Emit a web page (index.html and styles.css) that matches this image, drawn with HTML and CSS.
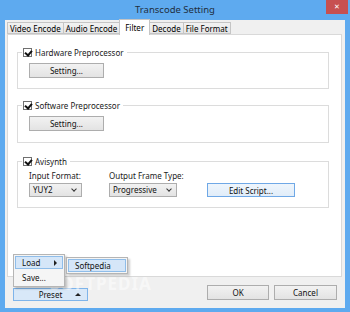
FILE: index.html
```html
<!DOCTYPE html>
<html lang="en">
<head>
    <meta charset="UTF-8">
    <title>Transcode Setting</title>
    <link rel="stylesheet" href="styles.css">
</head>
<body>

    <div class="window">
        <div class="titlebar">
            <span class="title">Transcode Setting</span>
            <div class="close">&#x2715;</div>
        </div>

        <div class="client">
            <div class="tabs">
                <div class="tab">Video Encode</div>
                <div class="tab">Audio Encode</div>
                <div class="tab active">Filter</div>
                <div class="tab">Decode</div>
                <div class="tab">File Format</div>
            </div>

            <div class="panel">
                <fieldset class="group g1">
                    <legend><span class="check"></span>Hardware Preprocessor</legend>
                    <button class="btn setting">Setting...</button>
                </fieldset>

                <fieldset class="group g2">
                    <legend><span class="check"></span>Software Preprocessor</legend>
                    <button class="btn setting">Setting...</button>
                </fieldset>

                <fieldset class="group g3">
                    <legend><span class="check"></span>Avisynth</legend>
                    <div class="row">
                        <div class="field f1">
                            <label>Input Format:</label>
                            <div class="select small">YUY2<span class="chev"></span></div>
                        </div>
                        <div class="field f2">
                            <label>Output Frame Type:</label>
                            <div class="select wide">Progressive<span class="chev"></span></div>
                        </div>
                        <button class="btn edit focus">Edit Script...</button>
                    </div>
                </fieldset>
            </div>

            <div class="footer">
                <button class="btn preset hot">Preset<span class="up"></span></button>
                <div class="spacer"></div>
                <button class="btn ok">OK</button>
                <button class="btn cancel">Cancel</button>
            </div>

            <div class="watermark">SOFTPEDIA</div>

            <div class="menu">
                <div class="item hl">Load<span class="arrow"></span></div>
                <div class="item">Save...</div>
            </div>
            <div class="submenu">
                <div class="item hl">Softpedia</div>
            </div>
        </div>
    </div>

</body>
</html>
```

FILE: styles.css
```css
* {
    margin: 0;
    padding: 0;
    box-sizing: border-box;
    font-family: 'Noto Sans', 'DejaVu Sans', sans-serif;
}

body {
    width: 350px;
    height: 312px;
    overflow: hidden;
    background: #5eaaef;
}

.window {
    display: flex;
    flex-direction: column;
    width: 350px;
    height: 312px;
    background: #5eaaef;
}

.titlebar {
    position: relative;
    height: 20px;
    display: flex;
    justify-content: center;
    align-items: center;
}

.title {
    font-size: 9.5px;
    color: #1f2e3d;
    padding-bottom: 2px;
}

.close {
    position: absolute;
    top: 0;
    right: 2px;
    width: 22px;
    height: 14px;
    background: #c75050;
    color: #fff;
    font-size: 7px;
    font-weight: bold;
    text-align: center;
    line-height: 14px;
}

.client {
    position: relative;
    flex: 1;
    margin: 0 5px 4px 5px;
    background: #f0f0f0;
    display: flex;
    flex-direction: column;
    padding: 2px 3px 0 2px;
}

.tabs {
    display: flex;
    height: 12px;
    position: relative;
    z-index: 1;
}

.tab {
    font-size: 8px;
    color: #000;
    padding: 0 2px;
    height: 12px;
    line-height: 11px;
    border: 1px solid #c5c5c5;
    border-right: none;
    background: linear-gradient(#f2f2f2, #e5e5e5);
}

.tab:last-child {
    border-right: 1px solid #c5c5c5;
}

.tab.active {
    background: #fff;
    height: 16px;
    margin-top: -3px;
    padding: 2px 5px 0;
    border-bottom: none;
    border-right: 1px solid #c5c5c5;
}

.tab.active + .tab {
    border-left: none;
}

.panel {
    height: 243px;
    background: #fff;
    border: 1px solid #d9d9d9;
    padding: 12px 12px 0 9px;
    display: flex;
    flex-direction: column;
}

.group {
    border: 1px solid #dcdcdc;
    padding: 0;
    font-size: 8px;
}

.group legend {
    display: flex;
    align-items: center;
    gap: 3px;
    margin-left: 4px;
    padding: 0 3px 0 1px;
    color: #1a1a1a;
    height: 11px;
}

.g1 { height: 42px; }
.g2 { height: 43px; margin-top: 11px; }
.g3 { height: 52px; margin-top: 13px; }

.check {
    width: 9px;
    height: 9px;
    border: 1px solid #707070;
    background: #fff;
    position: relative;
}

.check::after {
    content: "";
    position: absolute;
    left: 2px;
    top: 0;
    width: 3px;
    height: 5px;
    border: solid #111;
    border-width: 0 2px 2px 0;
    transform: rotate(40deg);
}

.btn {
    font-size: 8px;
    color: #111;
    height: 15px;
    border: 1px solid #adadad;
    background: linear-gradient(#f2f2f2, #e3e3e3);
    display: flex;
    align-items: center;
    justify-content: center;
}

.setting {
    width: 75px;
    margin: 5px 0 0 11px;
}

.row {
    display: flex;
    align-items: flex-end;
    margin: 3px 0 0 11px;
}

.field {
    display: flex;
    flex-direction: column;
    gap: 1px;
}

.f1 { width: 80px; }
.f2 { width: 98px; }

.field label {
    color: #1a1a1a;
    line-height: 12px;
}

.select {
    position: relative;
    height: 14px;
    border: 1px solid #adadad;
    background: linear-gradient(#f2f2f2, #e3e3e3);
    font-size: 8px;
    padding-left: 3px;
    line-height: 12px;
    color: #111;
}

.select.small { width: 53px; }
.select.wide { width: 68px; }

.chev {
    position: absolute;
    right: 5px;
    top: 3px;
    width: 4px;
    height: 4px;
    border: solid #333;
    border-width: 0 1px 1px 0;
    transform: rotate(45deg);
}

.edit {
    width: 88px;
    height: 14px;
}

.focus {
    border-color: #6fa8e6;
    background: linear-gradient(#eef5fc, #e1edf9);
}

.footer {
    flex: 1;
    display: flex;
    align-items: flex-start;
    padding-top: 8px;
    padding-left: 6px;
}

.spacer { flex: 1; }

.preset {
    position: relative;
    width: 75px;
    height: 13px;
    margin-top: 3px;
}

.hot {
    border-color: #7eb4ea;
    background: #d8e8f8;
}

.up {
    position: absolute;
    right: 6px;
    top: 4px;
    border: 3px solid transparent;
    border-top: none;
    border-bottom: 3px solid #222;
}

.ok {
    width: 62px;
    height: 15px;
    margin-right: 5px;
}

.cancel {
    width: 63px;
    height: 15px;
    margin-right: 5px;
}

.watermark {
    position: absolute;
    left: 45px;
    top: 256px;
    font-size: 17px;
    line-height: 16px;
    font-weight: bold;
    color: rgba(255, 255, 255, 0.5);
    letter-spacing: 1px;
}

.menu {
    position: absolute;
    left: 8px;
    top: 234px;
    width: 52px;
    background: #f5f5f5;
    border: 1px solid #b5b5b5;
    padding: 1px;
    box-shadow: 2px 2px 2px rgba(0, 0, 0, 0.2);
}

.submenu {
    position: absolute;
    left: 61px;
    top: 237px;
    width: 62px;
    background: #f5f5f5;
    border: 1px solid #b5b5b5;
    padding: 1px;
    box-shadow: 2px 2px 2px rgba(0, 0, 0, 0.2);
}

.item {
    position: relative;
    font-size: 8px;
    color: #111;
    height: 13px;
    line-height: 12px;
    padding-left: 6px;
    border: 1px solid transparent;
}

.menu .item + .item {
    margin-top: 2px;
    height: 14px;
}

.item.hl {
    background: #d5e6f8;
    border-color: #8fbde9;
}

.arrow {
    position: absolute;
    right: 5px;
    top: 3px;
    border: 3px solid transparent;
    border-right: none;
    border-left: 3px solid #222;
}
```
